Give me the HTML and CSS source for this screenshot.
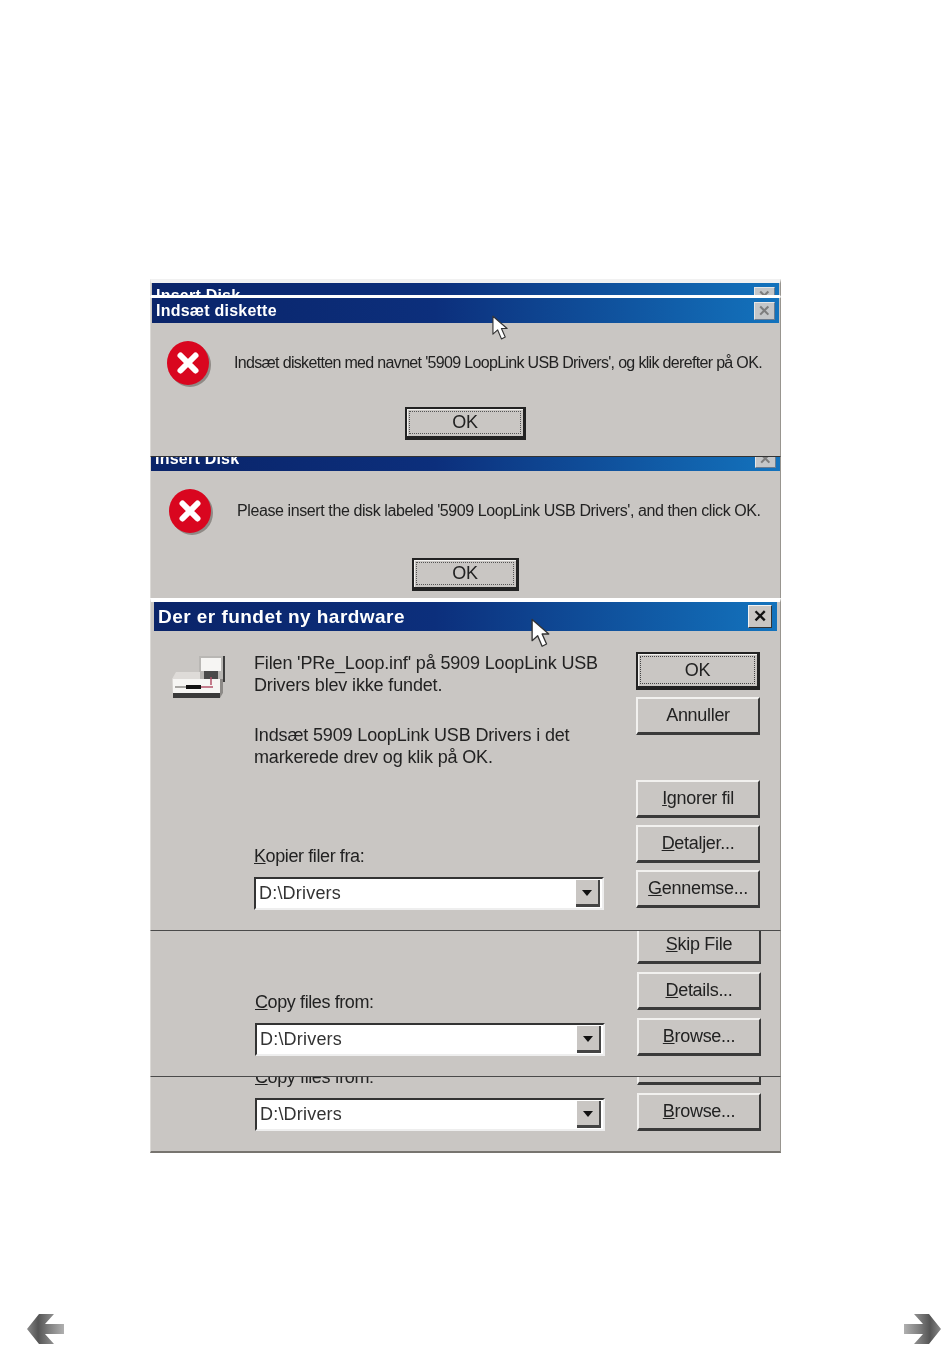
FILE: index.html
```html
<!DOCTYPE html>
<html lang="da">
<head>
    <meta charset="UTF-8">
    <meta name="viewport" content="width=device-width, initial-scale=1.0">
    <title>Der er fundet ny hardware</title>
    <link rel="stylesheet" href="styles.css">
</head>
<body>

    <svg class="defs" width="0" height="0">
        <defs>
            <linearGradient id="arrowLeft" x1="0" y1="0" x2="1" y2="0">
                <stop offset="0" stop-color="#8a8a8a"/>
                <stop offset="0.3" stop-color="#555"/>
                <stop offset="0.6" stop-color="#808080"/>
                <stop offset="1" stop-color="#b0b0b0"/>
            </linearGradient>
            <linearGradient id="arrowRight" x1="1" y1="0" x2="0" y2="0">
                <stop offset="0" stop-color="#8a8a8a"/>
                <stop offset="0.3" stop-color="#555"/>
                <stop offset="0.6" stop-color="#808080"/>
                <stop offset="1" stop-color="#b0b0b0"/>
            </linearGradient>
            <symbol id="errorIcon" viewBox="0 0 46 48">
                <ellipse cx="23" cy="25" rx="21" ry="22" fill="#8f8a86"/>
                <ellipse cx="21" cy="23" rx="21" ry="22" fill="#d9061f"/>
                <path d="M13.5 15.5 L28.5 30.5 M28.5 15.5 L13.5 30.5" stroke="#fff" stroke-width="6" stroke-linecap="round"/>
            </symbol>
            <symbol id="cursor" viewBox="0 0 18 28">
                <path d="M1 1 L1 20 L6 15.5 L10 25 L14 23 L10 14 L16 14 Z" fill="#fff" stroke="#333" stroke-width="1.2" stroke-linejoin="round"/>
            </symbol>
        </defs>
    </svg>

    <main class="stack">

        <!-- Bagerste dialog, kun titellinjen ses -->
        <section class="dialog dialog-sliver">
            <div class="titlebar">
                <span class="title">Insert Disk</span>
                <span class="close close-faded">&#10005;</span>
            </div>
        </section>

        <section class="dialog dialog-dansk">
            <div class="titlebar">
                <span class="title">Indsæt diskette</span>
                <span class="close close-faded">&#10005;</span>
            </div>
            <div class="message">
                <svg class="error-icon"><use href="#errorIcon"/></svg>
                <p class="message-text">Indsæt disketten med navnet '5909 LoopLink USB Drivers', og klik derefter på OK.</p>
            </div>
            <button class="btn btn-default btn-ok" type="button"><span>OK</span></button>
            <svg class="cursor cursor-small"><use href="#cursor"/></svg>
        </section>

        <section class="dialog dialog-english">
            <div class="titlebar">
                <span class="title">Insert Disk</span>
                <span class="close close-faded">&#10005;</span>
            </div>
            <div class="message">
                <svg class="error-icon"><use href="#errorIcon"/></svg>
                <p class="message-text">Please insert the disk labeled '5909 LoopLink USB Drivers', and then click OK.</p>
            </div>
            <button class="btn btn-default btn-ok" type="button"><span>OK</span></button>
        </section>

        <section class="dialog dialog-main">
            <div class="titlebar">
                <span class="title">Der er fundet ny hardware</span>
                <span class="close">&#10005;</span>
            </div>
            <div class="body">
                <svg class="drive-icon" viewBox="0 0 54 44">
                    <rect x="28" y="1" width="25" height="25" fill="#b9b7b4"/>
                    <rect x="30" y="3" width="20" height="13" fill="#f6f5f3"/>
                    <path d="M53 1 V26 H28" fill="none" stroke="#3c3c3c" stroke-width="2"/>
                    <rect x="33" y="16" width="14" height="10" fill="#4a4a4a"/>
                    <path d="M1 24 L5 17 H29 V24 H52 V38 L49 43 H2 Z" fill="#dedbd8"/>
                    <rect x="2" y="24" width="47" height="14" fill="#f6f5f3"/>
                    <path d="M49 24 H52 V38 L49 43 Z" fill="#8d8a87"/>
                    <rect x="2" y="38" width="47" height="5" fill="#3a3a3a"/>
                    <rect x="15" y="30" width="15" height="4" fill="#111"/>
                    <path d="M4 32 H15" stroke="#8d8a87" stroke-width="1.5"/>
                    <path d="M30 32 H42 M40 22 V30" stroke="#b4536a" stroke-width="1.5"/>
                </svg>
                <div class="col-left">
                    <p class="para">Filen 'PRe_Loop.inf' på 5909 LoopLink USB Drivers blev ikke fundet.</p>
                    <p class="para">Indsæt 5909 LoopLink USB Drivers i det markerede drev og klik på OK.</p>
                    <div class="copy-from">
                        <label class="field-label"><u>K</u>opier filer fra:</label>
                        <div class="combo">
                            <span class="combo-value">D:\Drivers</span>
                            <span class="combo-arrow"></span>
                        </div>
                    </div>
                </div>
                <div class="col-buttons">
                    <button class="btn btn-default" type="button"><span class="focus">OK</span></button>
                    <button class="btn" type="button">Annuller</button>
                    <button class="btn btn-spaced" type="button"><u>I</u>gnorer fil</button>
                    <button class="btn" type="button"><u>D</u>etaljer...</button>
                    <button class="btn" type="button"><u>G</u>ennemse...</button>
                </div>
            </div>
            <svg class="cursor cursor-large"><use href="#cursor"/></svg>
        </section>

        <!-- De to sidste er kun bunden af den engelske dialog -->
        <section class="dialog dialog-tail dialog-tail-high">
            <div class="body">
                <div class="col-left">
                    <div class="copy-from">
                        <label class="field-label"><u>C</u>opy files from:</label>
                        <div class="combo">
                            <span class="combo-value">D:\Drivers</span>
                            <span class="combo-arrow"></span>
                        </div>
                    </div>
                </div>
                <div class="col-buttons">
                    <button class="btn" type="button"><u>S</u>kip File</button>
                    <button class="btn" type="button"><u>D</u>etails...</button>
                    <button class="btn" type="button"><u>B</u>rowse...</button>
                </div>
            </div>
        </section>

        <section class="dialog dialog-tail dialog-tail-low">
            <div class="body">
                <div class="col-left">
                    <div class="copy-from">
                        <label class="field-label"><u>C</u>opy files from:</label>
                        <div class="combo">
                            <span class="combo-value">D:\Drivers</span>
                            <span class="combo-arrow"></span>
                        </div>
                    </div>
                </div>
                <div class="col-buttons">
                    <button class="btn" type="button"><u>D</u>etails...</button>
                    <button class="btn" type="button"><u>B</u>rowse...</button>
                </div>
            </div>
        </section>
    </main>

    <footer class="pager">
        <a href="#" class="pager-link" aria-label="Forrige">
            <svg width="38" height="30" viewBox="0 0 38 30"><path d="M0 15 L12 0 H27 L18 10 H37 V20 H18 L27 30 H12 Z" fill="url(#arrowLeft)"/></svg>
        </a>
        <a href="#" class="pager-link" aria-label="Næste">
            <svg width="38" height="30" viewBox="0 0 38 30"><path d="M38 15 L26 0 H11 L20 10 H1 V20 H20 L11 30 H26 Z" fill="url(#arrowRight)"/></svg>
        </a>
    </footer>

</body>
</html>
```

FILE: styles.css
```css
/* Siden */
body {
    margin: 0;
    background: #fff;
    color: #222;
    font-family: 'Liberation Sans', Arial, sans-serif;
    height: 1355px;
    overflow: hidden;
}

* {
    box-sizing: border-box;
}

.defs {
    position: absolute;
}

.stack {
    width: 631px;
    margin: 279px 0 0 150px;
    filter: blur(0.6px);
}

/* Dialoger */
.dialog {
    position: relative;
    overflow: hidden;
    background: #c9c6c3;
    border-right: 1px solid #98958f;
    border-left: 1px solid #dcdad7;
}

.dialog-sliver {
    height: 18px;
    border-top: 4px solid #f1f1f1;
    border-bottom: 2px solid #fff;
    padding: 0 1px;
}

.dialog-dansk {
    height: 159px;
    padding: 0 1px;
    border-top: 1px solid #fff;
    text-align: center;
}

.dialog-english {
    height: 142px;
    border-top: 1px solid #333;
    text-align: center;
}

.dialog-main {
    height: 332px;
    border-top: 4px solid #fff;
    padding: 0 3px;
}

.dialog-tail {
    border-top: 1px solid #4a4a4a;
    display: flex;
    flex-direction: column;
    justify-content: flex-end;
}

.dialog-tail-high {
    height: 146px;
}

.dialog-tail-low {
    height: 77px;
    border-bottom: 2px solid #77746f;
}

/* Titellinje */
.titlebar {
    display: flex;
    align-items: center;
    justify-content: space-between;
    height: 25px;
    padding: 0 4px;
    background: linear-gradient(to right, #0a2469 0%, #0c2f7c 45%, #1373bd 100%);
    color: #fff;
    font-weight: bold;
    font-size: 16px;
}

.title {
    letter-spacing: 0.23px;
}

.dialog-english .titlebar {
    margin-top: -11px;
}

.dialog-main .titlebar {
    height: 29px;
    padding: 0 5px 0 4px;
    font-size: 19px;
}

.dialog-main .title {
    letter-spacing: 0.46px;
}

.close {
    display: flex;
    align-items: center;
    justify-content: center;
    width: 24px;
    height: 23px;
    background: #c9c6c3;
    border: 1px solid;
    border-color: #f2f2f2 #333 #333 #f2f2f2;
    color: #111;
    font-size: 17px;
}

.close-faded {
    width: 21px;
    height: 18px;
    margin-right: 0;
    background: #c4c6c8;
    border-color: #e6e6e6 #6b7c90 #6b7c90 #e6e6e6;
    color: #7d7d7d;
    font-size: 15px;
}

/* Meddelelse med fejlikon */
.message {
    display: flex;
    align-items: center;
    padding: 17px 0 0 15px;
}

.dialog-english .message {
    padding-left: 18px;
}

.error-icon {
    width: 46px;
    height: 48px;
    flex: none;
}

.message-text {
    margin: 0 0 3px 21px;
    font-size: 16px;
    letter-spacing: -0.67px;
    white-space: nowrap;
}

.dialog-english .message-text {
    margin-left: 22px;
    letter-spacing: -0.4px;
}

.dialog-dansk .btn-ok {
    width: 121px;
    height: 33px;
    margin-top: 19px;
}

.dialog-english .btn-ok {
    width: 107px;
    height: 33px;
    margin-top: 22px;
}

.btn-ok span {
    display: flex;
    align-items: center;
    justify-content: center;
    height: 100%;
    border: 1px dotted #555;
}

/* Filkopi dialog */
.body {
    display: flex;
    padding: 20px 17px 20px 18px;
}

.dialog-main .body {
    height: 299px;
    padding: 21px 17px 20px 17px;
}

.dialog-tail .body {
    padding: 0 21px 20px 104px;
    justify-content: space-between;
    align-items: flex-end;
}

.drive-icon {
    width: 54px;
    height: 44px;
    flex: none;
    margin: 3px 29px 0 0;
}

.col-left {
    display: flex;
    flex-direction: column;
    width: 350px;
    flex: none;
}

.para {
    margin: 0 0 28px;
    font-size: 18px;
    line-height: 22px;
    letter-spacing: -0.15px;
}

.copy-from {
    margin-top: auto;
}

.field-label {
    display: block;
    margin-bottom: 10px;
    font-size: 18px;
    line-height: 22px;
    letter-spacing: -0.4px;
}

.combo {
    display: flex;
    align-items: center;
    justify-content: space-between;
    height: 33px;
    padding: 1px 2px 1px 3px;
    background: #fff;
    border: 2px solid;
    border-color: #333 #eee #eee #333;
    font-size: 18px;
    letter-spacing: 0.2px;
}

.combo-value {
    color: #333;
}

.combo-arrow {
    position: relative;
    width: 24px;
    height: 100%;
    background: #c9c6c3;
    border-right: 2px solid #444;
    border-bottom: 3px solid #444;
}

.combo-arrow::after {
    content: "";
    position: absolute;
    left: 6px;
    top: 10px;
    border-left: 5px solid transparent;
    border-right: 5px solid transparent;
    border-top: 6px solid #111;
}

.col-buttons {
    display: flex;
    flex-direction: column;
    gap: 7px;
    width: 124px;
    flex: none;
    margin-left: 32px;
}

.dialog-tail .col-buttons {
    gap: 8px;
}

.btn-spaced {
    margin-top: 38px;
}

/* Knapper */
.btn {
    display: block;
    width: 124px;
    height: 38px;
    padding: 0;
    background: #c9c6c3;
    border: 2px solid;
    border-color: #f2f1ef #3a3a3a #3a3a3a #f2f1ef;
    border-bottom-width: 3px;
    color: #222;
    font-family: inherit;
    font-size: 18px;
    letter-spacing: -0.3px;
}

.btn-default {
    border: 2px solid #222;
    border-bottom-width: 4px;
    border-right-width: 3px;
    box-shadow: inset 1px 1px 0 #f2f1ef;
}

.btn-ok {
    margin-left: auto;
    margin-right: auto;
    padding: 2px;
}

.focus {
    display: flex;
    align-items: center;
    justify-content: center;
    margin: 2px;
    height: calc(100% - 4px);
    border: 1px dotted #444;
}

/* Musemarkører ligger oven på dialogerne */
.cursor {
    position: absolute;
}

.cursor-small {
    left: 341px;
    top: 17px;
    width: 17px;
    height: 27px;
}

.cursor-large {
    left: 380px;
    top: 16px;
    width: 20px;
    height: 32px;
}

/* Pile nederst */
.pager {
    display: flex;
    justify-content: space-between;
    padding: 0 9px 0 27px;
    margin-top: 161px;
}

.pager-link {
    display: block;
    height: 30px;
}
```
